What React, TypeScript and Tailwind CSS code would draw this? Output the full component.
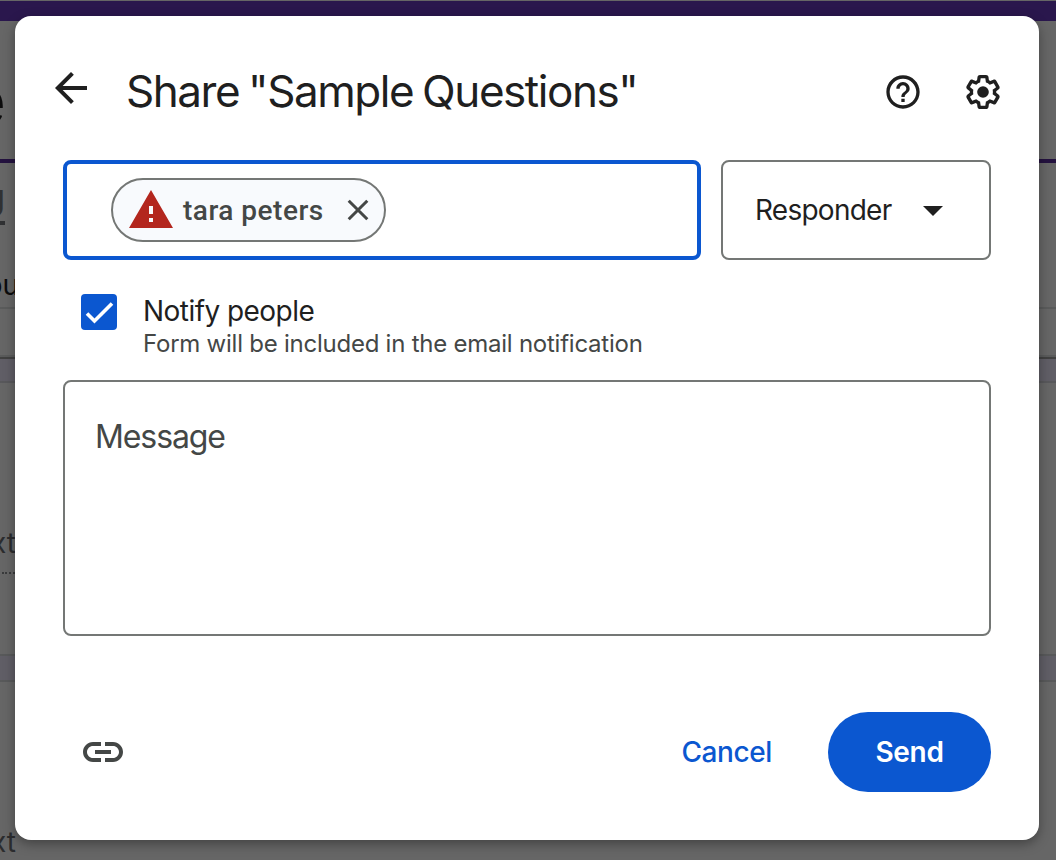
import type { ReactNode } from "react";

function Icon({ d, className, children }: { d?: string; className: string; children?: ReactNode }) {
  return (
    <svg viewBox="0 0 24 24" fill="currentColor" className={className} aria-hidden="true">
      {d && <path d={d} />}
      {children}
    </svg>
  );
}

const ARROW_BACK = "M20 11H7.83l5.59-5.59L12 4l-8 8 8 8 1.41-1.41L7.83 13H20v-2z";
const HELP =
  "M11 18h2v-2h-2v2zm1-16C6.48 2 2 6.48 2 12s4.48 10 10 10 10-4.48 10-10S17.52 2 12 2zm0 18c-4.41 0-8-3.59-8-8s3.59-8 8-8 8 3.59 8 8-3.59 8-8 8zm0-14c-2.21 0-4 1.79-4 4h2c0-1.1.9-2 2-2s2 .9 2 2c0 2-3 1.75-3 5h2c0-2.25 3-2.5 3-5 0-2.21-1.79-4-4-4z";
const GEAR =
  "M13.85 22.25h-3.7c-.74 0-1.36-.54-1.45-1.27l-.27-1.89c-.27-.14-.53-.29-.79-.46l-1.8.72c-.7.26-1.47-.03-1.81-.65L2.2 15.53c-.35-.66-.2-1.44.36-1.88l1.53-1.19c-.01-.15-.02-.3-.02-.46 0-.15.01-.31.02-.46l-1.52-1.19c-.59-.45-.74-1.26-.37-1.88l1.85-3.19c.34-.62 1.11-.9 1.79-.63l1.81.73c.26-.17.52-.32.78-.46l.27-1.91c.09-.7.71-1.25 1.44-1.25h3.7c.74 0 1.36.54 1.45 1.27l.27 1.89c.27.14.53.29.79.46l1.8-.72c.71-.26 1.48.03 1.82.65l1.84 3.18c.36.66.2 1.44-.36 1.88l-1.52 1.19c.01.15.02.3.02.46s-.01.31-.02.46l1.52 1.19c.56.45.72 1.23.37 1.86l-1.86 3.22c-.34.62-1.11.9-1.8.63l-1.8-.72c-.26.17-.52.32-.78.46l-.27 1.91c-.1.68-.72 1.22-1.46 1.22zm-3.23-2h2.76l.37-2.55.53-.22c.44-.18.88-.44 1.34-.78l.45-.34 2.38.96 1.38-2.4-2.03-1.58.07-.56c.03-.26.06-.51.06-.78s-.03-.53-.06-.78l-.07-.56 2.03-1.58-1.39-2.4-2.39.96-.45-.35c-.42-.32-.87-.58-1.33-.77l-.52-.22-.37-2.55h-2.76l-.37 2.55-.53.21c-.44.19-.88.44-1.34.79l-.45.33-2.38-.95-1.39 2.39 2.03 1.58-.07.56a7 7 0 0 0-.06.79c0 .26.02.53.06.78l.07.56-2.03 1.58 1.38 2.4 2.39-.96.45.35c.43.33.86.58 1.33.77l.53.22.38 2.55z";
const WARNING = "M1 21h22L12 2 1 21zm12-3h-2v-2h2v2zm0-4h-2v-4h2v4z";
const LINK =
  "M11 15H7c-1.65 0-3-1.35-3-3s1.35-3 3-3h4V7H7c-2.76 0-5 2.24-5 5s2.24 5 5 5h4v-2zm6-8h-4v2h4c1.65 0 3 1.35 3 3s-1.35 3-3 3h-4v2h4c2.76 0 5-2.24 5-5s-2.24-5-5-5zm-9 4h8v2H8v-2z";

function DimmedForm() {
  return (
    <div className="flex h-full flex-col bg-[#666666]">
      <div className="mt-px h-5 shrink-0 bg-[#2a174d]" />
      <div className="flex h-[138px] w-1.5 shrink-0 items-center justify-end overflow-hidden whitespace-nowrap pt-5 text-[66px] leading-none text-[#0c0c0d]">
        <span>e</span>
      </div>
      <div className="h-1 shrink-0 bg-[#24123f]" />
      <div className="flex h-[144px] w-[20px] shrink-0 flex-col items-end overflow-hidden whitespace-nowrap">
        <div className="mt-[16px] mr-[15px] h-[46px] border-b-4 border-[#303133] text-[38px] leading-[50px] font-bold text-[#303133]">U</div>
        <div className="mt-[42px] mr-px text-[28px] leading-9 text-[#0c0c0d]">ou</div>
      </div>
      <div className="h-0.5 shrink-0 bg-[#5a5b5b]" />
      <div className="h-[46px] shrink-0" />
      <div className="h-0.5 shrink-0 bg-[#5a5b5b]" />
      <div className="h-0.5 shrink-0 bg-[#414141]" />
      <div className="h-[22px] shrink-0 bg-[#605e66]" />
      <div className="h-0.5 shrink-0 bg-[#58585b]" />
      <div className="h-[271px] shrink-0">
        <div className="flex w-4 justify-end overflow-hidden whitespace-nowrap pt-[144px] text-[28px] leading-8 text-[#2b2c2e]">xt</div>
        <div className="mt-[13px] ml-0.5 w-4 border-t-2 border-dotted border-[#3a3b3c]" />
      </div>
      <div className="h-0.5 shrink-0 bg-[#58595a]" />
      <div className="h-6 shrink-0 bg-[#605e66]" />
      <div className="h-0.5 shrink-0 bg-[#58595a]" />
      <div className="flex w-4 justify-end overflow-hidden whitespace-nowrap pt-[144px] text-[28px] leading-8 text-[#2b2c2e]">xt</div>
    </div>
  );
}

export default function App() {
  return (
    <div className="relative h-[860px] w-[1056px] overflow-hidden font-['Inter',sans-serif] text-[#1f1f1f]">
      <DimmedForm />
      <div className="absolute inset-0 pt-4 pl-[15px]">
        <section
          role="dialog"
          aria-label="Share form"
          className="flex h-[824px] w-[1024px] flex-col rounded-2xl bg-white px-12 shadow-[0_4px_12px_rgba(0,0,0,0.35)]"
        >
          <header className="-ml-4 -mr-3 flex h-[144px] items-start pt-12">
            <button aria-label="Back" className="size-12">
              <Icon d={ARROW_BACK} className="size-12" />
            </button>
            <h1 className="-mt-px ml-[31px] flex-1 whitespace-nowrap text-[44px] leading-14 font-normal tracking-[-1.45px] [word-spacing:-2px]">
              Share "Sample Questions"
            </h1>
            <div className="flex gap-10 pt-2">
              <Icon d={HELP} className="size-10" />
              <Icon d={GEAR} className="size-10">
                <circle cx="12" cy="12" r="3.5" />
              </Icon>
            </div>
          </header>

          <div className="flex h-[100px] shrink-0 gap-5">
            <div className="flex w-[638px] items-center rounded-lg border-4 border-[#0b57d0] pl-11">
              <div className="flex h-16 w-[275px] items-center rounded-full border-2 border-[#747775] bg-[#f8fafd] pl-3.5">
                <Icon d={WARNING} className="size-12 shrink-0 text-[#b3261e]" />
                <span className="ml-2 w-[155px] shrink-0 whitespace-nowrap pt-0.5 font-['Roboto',sans-serif] text-[28px] font-medium tracking-[0.5px] text-[#444746]">
                  tara peters
                </span>
                <svg viewBox="0 0 40 40" className="size-10 shrink-0" fill="none" stroke="#444746" strokeWidth="3">
                  <path d="M10.7 10.7 29.3 29.3M29.3 10.7 10.7 29.3" />
                </svg>
              </div>
            </div>
            <button className="flex w-[270px] items-center rounded-lg border-2 border-[#747775] pl-8 text-[28px] tracking-[-0.75px]">
              <span className="w-[154px] text-left">Responder</span>
              <Icon d="M7 10l5 5 5-5z" className="size-12 shrink-0" />
            </button>
          </div>

          <label className="flex h-[120px] shrink-0 items-start pt-[34px] pl-[18px]">
            <svg viewBox="0 0 36 36" className="size-9 shrink-0">
              <rect width="36" height="36" rx="4" fill="#0b57d0" />
              <path d="M6 19.5 13.5 27 31 9.5" fill="none" stroke="#fff" strokeWidth="3.6" />
            </svg>
            <span className="-mt-px ml-[26px] flex flex-col whitespace-nowrap">
              <span className="text-[28px] leading-9 tracking-[-0.55px]">Notify people</span>
              <span className="pt-px text-[24px] leading-7 tracking-[-0.24px] text-[#444746]">Form will be included in the email notification</span>
            </span>
          </label>

          <div className="h-64 shrink-0 rounded-lg border-2 border-[#747775] px-[30px] pt-[37px] text-[32px] leading-9 tracking-[-1.1px] text-[#444746]">
            Message
          </div>

          <footer className="mt-[76px] flex h-20 items-center">
            <Icon d={LINK} className="ml-4 size-12 text-[#444746]" />
            <button className="ml-auto mr-14 text-[28px] font-medium tracking-[-0.4px] text-[#0b57d0]">Cancel</button>
            <button className="h-20 w-[163px] rounded-full bg-[#0b57d0] text-[28px] font-semibold tracking-[-0.3px] text-white">Send</button>
          </footer>
        </section>
      </div>
    </div>
  );
}
